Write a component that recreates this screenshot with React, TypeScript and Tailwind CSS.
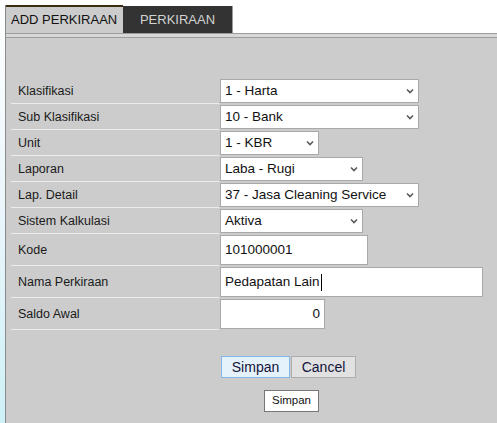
import React from "react";

const Chevron = () => (
  <svg width="8" height="6" viewBox="0 0 8 6" className="shrink-0">
    <path d="M1 1.5 L4 4.5 L7 1.5" fill="none" stroke="#5a5a5a" strokeWidth="1.6" />
  </svg>
);

type Row =
  | { label: string; kind: "select"; value: string; w: string }
  | { label: string; kind: "text"; value: string; w: string; right?: boolean; caret?: boolean };

const rows: Row[] = [
  { label: "Klasifikasi", kind: "select", value: "1 - Harta", w: "w-[199px]" },
  { label: "Sub Klasifikasi", kind: "select", value: "10 - Bank", w: "w-[199px]" },
  { label: "Unit", kind: "select", value: "1 - KBR", w: "w-[99px]" },
  { label: "Laporan", kind: "select", value: "Laba - Rugi", w: "w-[143px]" },
  { label: "Lap. Detail", kind: "select", value: "37 - Jasa Cleaning Service", w: "w-[199px]" },
  { label: "Sistem Kalkulasi", kind: "select", value: "Aktiva", w: "w-[143px]" },
  { label: "Kode", kind: "text", value: "101000001", w: "w-[148px]" },
  { label: "Nama Perkiraan", kind: "text", value: "Pedapatan Lain", w: "w-[263px]", caret: true },
  { label: "Saldo Awal", kind: "text", value: "0", w: "w-[105px]", right: true },
];

export default function App() {
  return (
    <div
      className="flex h-[423px] w-[497px] overflow-hidden bg-white text-[#111]"
      style={{ fontFamily: '"Liberation Sans", Arial, sans-serif' }}
    >
      <div className="h-full w-[5px] bg-gradient-to-b from-white via-[#eaf6fb] to-[#cdf1f7]" />
      <div className="flex h-full flex-1 flex-col pt-[5px]">
        <div className="flex h-full flex-col border-l border-[#8a8a8a]">
          {/* tabs */}
          <div className="flex h-[28px] items-stretch">
            <div className="flex w-[117px] items-center border-t-2 border-[#3b2c10] bg-[#cccccc] pl-[5px] text-[13px] text-[#111]">
              ADD PERKIRAAN
            </div>
            <div className="mt-px flex w-[110px] items-center justify-center border-r border-[#9a9a9a] bg-[#333333] text-[13px] text-[#d2d2d2]">
              PERKIRAAN
            </div>
          </div>
          <div className="h-[5px] border-y border-[#9c9c9c] bg-[#d8d8d8]" />
          {/* panel */}
          <div className="flex flex-1 flex-col bg-[#cccccc] pt-[41px]">
            <div className="ml-[5px] flex flex-col gap-px">
              {rows.map((r) => {
                const tall = r.kind === "text";
                return (
                  <div key={r.label} className="flex items-start gap-px">
                    <div
                      className={`flex w-[208px] items-center border-b border-[#ececec] pl-[7px] text-[12.5px] text-[#1a1a1a] ${
                        tall ? "h-[31px]" : "h-[25px]"
                      }`}
                    >
                      {r.label}
                    </div>
                    {r.kind === "select" ? (
                      <div
                        className={`flex h-[24px] items-center justify-between border border-[#a9a9a9] bg-white pl-[4px] pr-[4px] text-[13.5px] ${r.w}`}
                      >
                        <span>{r.value}</span>
                        <Chevron />
                      </div>
                    ) : (
                      <div
                        className={`flex h-[30px] items-center border border-[#a9a9a9] bg-white px-[4px] text-[13.5px] ${r.w} ${
                          r.right ? "justify-end" : ""
                        }`}
                      >
                        <span>{r.value}</span>
                        {r.caret && <span className="ml-px h-[17px] w-px bg-black" />}
                      </div>
                    )}
                  </div>
                );
              })}
            </div>
            <div className="mt-[26px] flex gap-px pl-[215px]">
              <button className="flex h-[22px] w-[69px] items-center justify-center border border-[#84b8e9] bg-[#e5f1fb] text-[14px] text-[#14143a]">
                Simpan
              </button>
              <button className="flex h-[22px] w-[65px] items-center justify-center border border-[#adadad] bg-[#e1e1e1] text-[14px] text-[#14143a]">
                Cancel
              </button>
            </div>
            <div className="mt-[12px] flex pl-[258px]">
              <button className="flex h-[22px] w-[55px] items-center justify-center border border-[#767676] bg-white text-[11.5px] text-[#111]">
                Simpan
              </button>
            </div>
          </div>
        </div>
      </div>
    </div>
  );
}
